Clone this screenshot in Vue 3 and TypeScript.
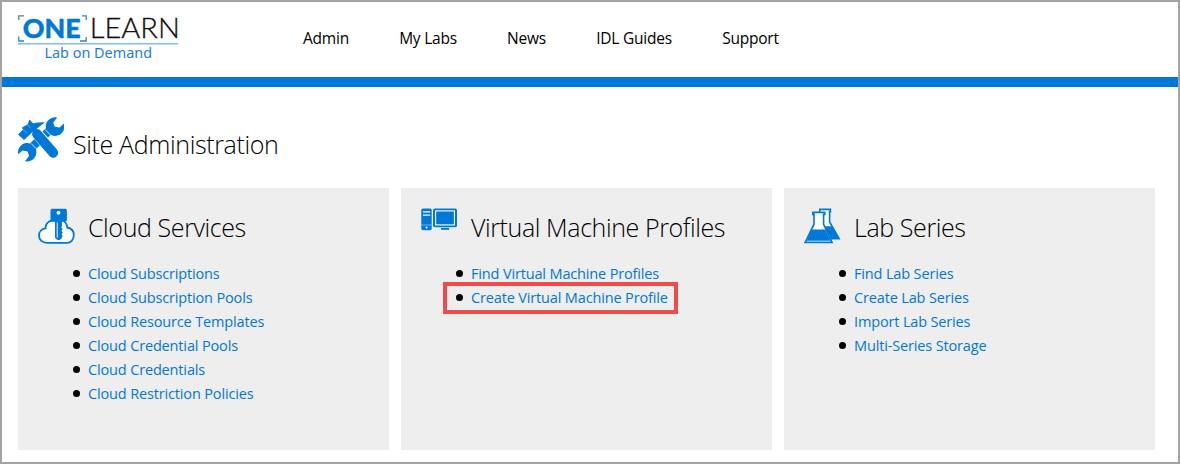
<script setup lang="ts">
interface Item {
  label: string
  highlighted?: boolean
}
interface Panel {
  title: string
  icon: 'cloud' | 'machine' | 'flask'
  items: Item[]
}

const nav: string[] = ['Admin', 'My Labs', 'News', 'IDL Guides', 'Support']

const panels: Panel[] = [
  {
    title: 'Cloud Services',
    icon: 'cloud',
    items: [
      { label: 'Cloud Subscriptions' },
      { label: 'Cloud Subscription Pools' },
      { label: 'Cloud Resource Templates' },
      { label: 'Cloud Credential Pools' },
      { label: 'Cloud Credentials' },
      { label: 'Cloud Restriction Policies' },
    ],
  },
  {
    title: 'Virtual Machine Profiles',
    icon: 'machine',
    items: [
      { label: 'Find Virtual Machine Profiles' },
      { label: 'Create Virtual Machine Profile', highlighted: true },
    ],
  },
  {
    title: 'Lab Series',
    icon: 'flask',
    items: [
      { label: 'Find Lab Series' },
      { label: 'Create Lab Series' },
      { label: 'Import Lab Series' },
      { label: 'Multi-Series Storage' },
    ],
  },
]
</script>

<template>
  <div class="page">
    <header class="header">
      <svg class="logo" width="164" height="60" viewBox="0 -10 164 60">
        <path d="M.8 5V.8H6M68.2 22v4H62" fill="none" stroke="#66788a" stroke-width="1.3" />
        <path d="M.8 21.5V26H6M64 .8h4.2V5" fill="none" stroke="#2288dd" stroke-width="1.3" />
        <text class="logo-one" x="4.8" y="22.5" textLength="58" lengthAdjust="spacingAndGlyphs">ONE</text>
        <text class="logo-learn" x="71.8" y="22.6" textLength="90" lengthAdjust="spacingAndGlyphs">LEARN</text>
        <path d="M0 28.7h160" stroke="#7fbcf2" stroke-width="1.5" />
        <text class="logo-sub" x="26.5" y="43.3" textLength="107.5" lengthAdjust="spacingAndGlyphs">Lab on Demand</text>
      </svg>
      <nav class="nav">
        <a v-for="n in nav" :key="n" class="nav-link">{{ n }}</a>
      </nav>
    </header>

    <main class="main">
      <div class="title-row">
        <svg class="tools" width="46" height="46" viewBox="0 0 46 46" fill="#0078d7">
          <path d="M11 33L34 11" stroke="#0078d7" stroke-width="8" />
          <path d="M39.2.6A9.3 9.3 0 1 0 45.8 6.6L41.6 10.6L36.8 9.8L35.2 5.4Z" />
          <path d="M.2 37.2L4.6 33.4L9.6 34.4L11 39L7 44.2A9.2 9.2 0 1 0 .2 37.2Z" />
          <path d="M27.2 12.6l5.6 5.8M13 26.4l5.8 6" stroke="#fff" stroke-width=".8" />
          <path d="M17.5 15L38 38" stroke="#fff" stroke-width="11" />
          <path d="M19 17L35.2 35.8" stroke="#0078d7" stroke-width="9.8" stroke-linecap="round" />
          <path d="M0 17.4L4.8 12.8L3.8 10.7L9.7 7.2L11.5 2.4L15 6.2Q20 5.2 27 5.3L14.5 14.9L6 23Z" />
          <path d="M4.3 11.5L8.8 16.4M8.8 7.1L12.5 11" stroke="#fff" stroke-width=".4" />
        </svg>
        <h1 class="title">Site Administration</h1>
      </div>

      <div class="panels">
        <section v-for="p in panels" :key="p.title" class="panel">
          <div class="panel-head">
            <svg v-if="p.icon === 'cloud'" class="icon" width="37" height="37" viewBox="0 0 37 37">
              <path
                d="M9 34.8C4 34.8 1 31.5 1 27.5C1 23.5 4 20.7 7.6 20.3C7.4 14.5 13 11.3 18.2 13C21 10.5 28.6 12 29.2 19.5C33.2 20.2 35.8 23 35.8 27C35.8 31.5 33 34.8 29 34.8Z"
                fill="#fff" stroke="#0078d7" stroke-width="1.8"
              />
              <path d="M17 13h7v5.2l-.9 1.2 1.5 1.5-1.2 2 1.4 1.7-1.2 1.7 1 1.7-1 2.2-2.3 2-2.2-.4-2.1-2Z" fill="#0078d7" />
              <path d="M19.3 14.5v15" stroke="#b7dafa" stroke-width="1.3" />
              <path d="M14.2.8h13q1.7 0 1.7 1.6V12q0 1.6-1.7 1.6h-13q-1.7 0-1.7-1.6V2.4Q12.5.8 14.2.8Z" fill="#0078d7" />
              <circle cx="20.5" cy="4.8" r="1.9" fill="#fff" />
            </svg>
            <svg v-else-if="p.icon === 'machine'" class="icon" width="37" height="37" viewBox="0 0 37 37">
              <rect x=".3" y=".6" width="10.4" height="21.6" rx="1.6" fill="#0078d7" />
              <path d="M2 3.9h7.2M2 7.1h7.2" stroke="#fff" stroke-width="1.1" />
              <path d="M.3 17h10.4" stroke="#8fc5f3" stroke-width=".7" />
              <circle cx="5.6" cy="19.6" r="1" fill="#fff" />
              <rect x="12" y=".6" width="24" height="18.6" rx="1.8" fill="#0078d7" />
              <rect x="14.6" y="2.9" width="18.8" height="14" fill="none" stroke="#fff" stroke-width="1.1" />
              <path d="M20 20.9h8.2" stroke="#0078d7" stroke-width="1.8" />
            </svg>
            <svg v-else class="icon" width="37" height="37" viewBox="0 0 37 37">
              <path d="M15.8 5V1.4H26.4V3.6H25.6V14L35.2 30.8H22Z" fill="#fff" stroke="#0078d7" stroke-width="1.6" />
              <path d="M20 18.2h8.2L35 30.6H24Z" fill="#0078d7" />
              <path d="M8.8 4.4h12v2h-1.2v9.8L28 34.4H1.2L10 16.2V6.4H8.8Z" fill="#fff" stroke="#0078d7" stroke-width="1.6" />
              <path d="M7.8 21.6H21.4L26.4 32.8H2.7Z" fill="#0078d7" />
            </svg>
            <h2 class="panel-title">{{ p.title }}</h2>
          </div>
          <ul class="list">
            <li v-for="i in p.items" :key="i.label" class="item" :class="{ highlighted: i.highlighted }">
              <a class="link">{{ i.label }}</a>
            </li>
          </ul>
        </section>
      </div>
    </main>
  </div>
</template>

<style>
body {
  margin: 0;
}
</style>

<style scoped>
.page {
  box-sizing: border-box;
  width: 1180px;
  height: 464px;
  border: 2px solid #a3a3a3;
  background: #fff;
  overflow: hidden;
  color: #000;
  font-family: 'Open Sans', 'Noto Sans', sans-serif;
}
.header {
  box-sizing: border-box;
  display: flex;
  align-items: flex-start;
  height: 85px;
  padding: 3px 16px 0;
  border-bottom: 10px solid #0078d7;
}
.logo {
  flex: none;
}
.logo-one {
  font: 900 27px Lato, sans-serif;
  fill: #0078d7;
  stroke: #0078d7;
  stroke-width: 0.4px;
}
.logo-learn {
  font: 300 27px Lato, sans-serif;
  fill: #111;
  stroke: #111;
  stroke-width: 0.3px;
}
.logo-sub {
  font: 400 15px 'Noto Sans', sans-serif;
  fill: #1b80d8;
}
.nav {
  display: flex;
  gap: 50.2px;
  margin: 21px 0 0 121px;
}
.nav-link {
  font-size: 15.5px;
  line-height: 24px;
  letter-spacing: -0.22px;
  white-space: nowrap;
}
.main {
  padding: 30px 16px 0;
}
.title-row {
  display: flex;
  height: 71px;
}
.tools {
  flex: none;
}
.title {
  margin: 9px 0 0 9px;
  font-size: 25px;
  font-weight: 300;
  line-height: 37px;
  letter-spacing: -0.36px;
}
.panels {
  display: grid;
  grid-template-columns: repeat(3, 371px);
  gap: 12px;
}
.panel {
  height: 262px;
  background: #eee;
}
.panel-head {
  display: flex;
  padding: 20px 0 0 20px;
  height: 53px;
}
.icon {
  flex: none;
}
.panel-title {
  margin: 1px 0 0 13px;
  font-size: 25px;
  font-weight: 300;
  line-height: 37px;
  letter-spacing: -0.4px;
  white-space: nowrap;
}
.list {
  margin: 0;
  padding: 1px 0 0 46px;
  list-style: none;
}
.item {
  display: flex;
  align-items: center;
  width: max-content;
  height: 24px;
}
.item::before {
  content: '';
  width: 7px;
  height: 7px;
  margin: 0 8px 1px 9px;
  border-radius: 50%;
  background: #000;
}
.highlighted {
  outline: 4px solid #ef4b4b;
  padding-right: 6px;
}
.link {
  font-size: 14.5px;
  line-height: 24px;
  letter-spacing: -0.15px;
  white-space: nowrap;
  color: #0078d7;
}
</style>
